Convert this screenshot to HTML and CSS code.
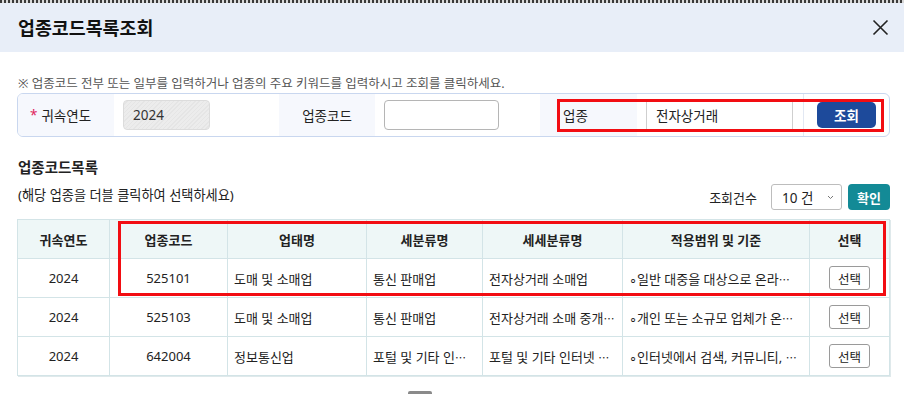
FILE: index.html
```html
<!DOCTYPE html>
<html lang="ko">
<head>
  <meta charset="utf-8">
  <title>업종코드목록조회</title>
  <link rel="stylesheet" href="styles.css">
</head>
<body>
  <div class="modal">
    <div class="modal-edge"></div>
    <div class="modal-head">
      <h1 class="modal-title">업종코드목록조회</h1>
      <button class="btn-close" type="button" aria-label="닫기">
        <svg width="17" height="17" viewBox="0 0 17 17"><path d="M1.5 1.5 L15.5 15.5 M15.5 1.5 L1.5 15.5" stroke="#222" stroke-width="1.6" fill="none"/></svg>
      </button>
    </div>

    <div class="modal-body">
      <p class="note">※ 업종코드 전부 또는 일부를 입력하거나 업종의 주요 키워드를 입력하시고 조회를 클릭하세요.</p>

      <div class="search-box">
        <div class="s-label s-label-first"><span class="req">*</span> 귀속연도</div>
        <div class="s-value"><div class="inp inp-disabled">2024</div></div>
        <div class="s-label s-label-center">업종코드</div>
        <div class="s-value"><div class="inp inp-code"></div></div>
        <div class="s-label s-label-wide">업종</div>
        <div class="s-value s-value-kw"><div class="inp inp-kw">전자상거래</div></div>
        <div class="s-btn"><button class="btn-search" type="button">조회</button></div>
        <div class="mark mark-search"></div>
      </div>

      <h2 class="sec-title">업종코드목록</h2>
      <div class="list-bar">
        <p class="hint">(해당 업종을 더블 클릭하여 선택하세요)</p>
        <div class="count-ctrl">
          <span class="count-label">조회건수</span>
          <div class="sel">10 건
            <svg width="7" height="5" viewBox="0 0 7 5"><path d="M1 1 L3.5 3.5 L6 1" stroke="#777" stroke-width="1" fill="none"/></svg>
          </div>
          <button class="btn-ok" type="button">확인</button>
        </div>
      </div>

      <div class="table-wrap">
        <table class="grid">
          <colgroup>
            <col style="width:92px"><col style="width:118px"><col style="width:139px"><col style="width:116px"><col style="width:140px"><col style="width:187px"><col style="width:80px">
          </colgroup>
          <thead>
            <tr>
              <th>귀속연도</th><th>업종코드</th><th>업태명</th><th>세분류명</th><th>세세분류명</th><th>적용범위 및 기준</th><th>선택</th>
            </tr>
          </thead>
          <tbody>
            <tr>
              <td class="c">2024</td><td class="c">525101</td><td>도매 및 소매업</td><td>통신 판매업</td><td>전자상거래 소매업</td><td>∘일반 대중을 대상으로 온라<span class="ell">⋯</span></td><td class="c"><button class="btn-pick" type="button">선택</button></td>
            </tr>
            <tr>
              <td class="c">2024</td><td class="c">525103</td><td>도매 및 소매업</td><td>통신 판매업</td><td>전자상거래 소매 중개<span class="ell">⋯</span></td><td>∘개인 또는 소규모 업체가 온<span class="ell">⋯</span></td><td class="c"><button class="btn-pick" type="button">선택</button></td>
            </tr>
            <tr>
              <td class="c">2024</td><td class="c">642004</td><td>정보통신업</td><td>포털 및 기타 인<span class="ell">⋯</span></td><td>포털 및 기타 인터넷 <span class="ell">⋯</span></td><td>∘인터넷에서 검색, 커뮤니티, <span class="ell">⋯</span></td><td class="c"><button class="btn-pick" type="button">선택</button></td>
            </tr>
          </tbody>
        </table>
        <div class="mark mark-table"></div>
      </div>

      <div class="pager-peek"></div>
    </div>
  </div>
</body>
</html>
```

FILE: styles.css
```css
body {
  margin: 0;
  font-family: "Noto Sans", "Noto Sans CJK KR", sans-serif;
  color: #222;
  background: #fff;
  overflow: hidden;
}

.modal {
  width: 904px;
  height: 394px;
  background: #fff;
}

.modal-edge {
  height: 3px;
  background: repeating-linear-gradient(90deg, #3a3a3a 0 2px, #d8d8d8 2px 4px);
}

.modal-head {
  height: 49px;
  background: #e8eef8;
  display: flex;
  align-items: center;
  justify-content: space-between;
  padding: 0 15px 0 18px;
}

.modal-title {
  margin: 0;
  font-size: 18.4px;
  font-weight: 700;
  color: #111;
  line-height: 22px;
}

.btn-close {
  border: none;
  background: none;
  padding: 0;
  width: 17px;
  height: 17px;
  display: flex;
}

.modal-body {
  padding: 0 14px 0 17px;
}

.note {
  margin: 24px 0 1px 1px;
  font-size: 12.5px;
  line-height: 16px;
  color: #555;
}

.search-box {
  position: relative;
  display: flex;
  height: 42px;
  border: 1px solid #c9d7ef;
  border-radius: 6px;
  overflow: hidden;
}

.s-label {
  display: flex;
  align-items: center;
  background: #f6f8fd;
  font-size: 13.5px;
  color: #222;
}

.s-label-first {
  width: 84px;
  padding-left: 12px;
}

.s-label-center {
  width: 96px;
  justify-content: center;
}

.s-label-wide {
  width: 74px;
  padding-left: 23px;
}

.req {
  color: #e0245e;
  margin-right: 4px;
}

.s-value {
  width: 156px;
  padding-left: 9px;
  display: flex;
  align-items: center;
}

.s-value-kw {
  width: 157px;
}

.inp {
  height: 28px;
  border: 1px solid #b5b5b5;
  border-radius: 4px;
  display: flex;
  align-items: center;
  padding-left: 9px;
  font-size: 13.5px;
  box-sizing: content-box;
}

.inp-disabled {
  width: 76px;
  border-color: #dcdcdc;
  color: #333;
  background: repeating-linear-gradient(135deg, #ececec 0 2px, #e5e5e5 2px 3px);
}

.inp-code {
  width: 104px;
}

.inp-kw {
  width: 136px;
  border-radius: 0;
  border-color: #cfcfcf;
}

.s-btn {
  flex: 1;
  border-left: 1px solid #e2e8f3;
  display: flex;
  align-items: center;
  padding-left: 13px;
}

.btn-search {
  width: 59px;
  height: 26px;
  border: none;
  border-radius: 5px;
  background: #1d4a9b;
  color: #fff;
  font-family: inherit;
  font-size: 13.5px;
  font-weight: 700;
}

.mark {
  position: absolute;
  border: 3px solid #f20d12;
  box-sizing: border-box;
  pointer-events: none;
}

.mark-search {
  left: 539px;
  top: 5px;
  width: 327px;
  height: 33px;
}

.sec-title {
  margin: 21px 0 0 1px;
  font-size: 14.5px;
  font-weight: 700;
  line-height: 18px;
}

.list-bar {
  display: flex;
  align-items: center;
  justify-content: space-between;
  margin-top: 8px;
  height: 26px;
}

.hint {
  margin: 0 0 5px 1px;
  font-size: 13.2px;
  line-height: 16px;
}

.count-ctrl {
  display: flex;
  align-items: center;
}

.count-label {
  font-size: 13px;
}

.sel {
  height: 24px;
  margin-left: 14px;
  border: 1px solid #bdbdbd;
  border-radius: 3px;
  display: flex;
  align-items: center;
  justify-content: space-between;
  padding: 0 7px 0 10px;
  box-sizing: content-box;
  font-size: 13.5px;
  width: 52px;
}

.btn-ok {
  margin-left: 6px;
  width: 42px;
  height: 26px;
  border: none;
  border-radius: 4px;
  background: #138a96;
  color: #fff;
  font-family: inherit;
  font-size: 13px;
  font-weight: 700;
}

.table-wrap {
  position: relative;
  margin-top: 9px;
  width: 873px;
}

.grid {
  width: 873px;
  table-layout: fixed;
  border-collapse: collapse;
  border: 1px solid #cfe1e4;
  box-shadow: 1px 1px 0 #dfe9eb;
  font-size: 13px;
}

.grid th,
.grid td {
  border: 1px solid #d3e4e7;
  height: 38px;
  padding: 0 6px;
  white-space: nowrap;
  overflow: hidden;
}

.grid th {
  background: #eef7f7;
  font-weight: 700;
  text-align: center;
}

.grid td.c {
  text-align: center;
}

.ell {
  font-family: "Noto Sans CJK KR", sans-serif;
  font-size: 11px;
}

.btn-pick {
  width: 41px;
  height: 24px;
  border: 1px solid #9a9a9a;
  border-radius: 3px;
  background: #fff;
  font-family: inherit;
  font-size: 12.5px;
  color: #222;
  padding: 0;
}

.mark-table {
  left: 101px;
  top: 2px;
  width: 768px;
  height: 75px;
}

.pager-peek {
  margin: 15px 0 0 391px;
  width: 24px;
  height: 8px;
  background: #8a8a8a;
  border-radius: 2px 2px 0 0;
}
```
